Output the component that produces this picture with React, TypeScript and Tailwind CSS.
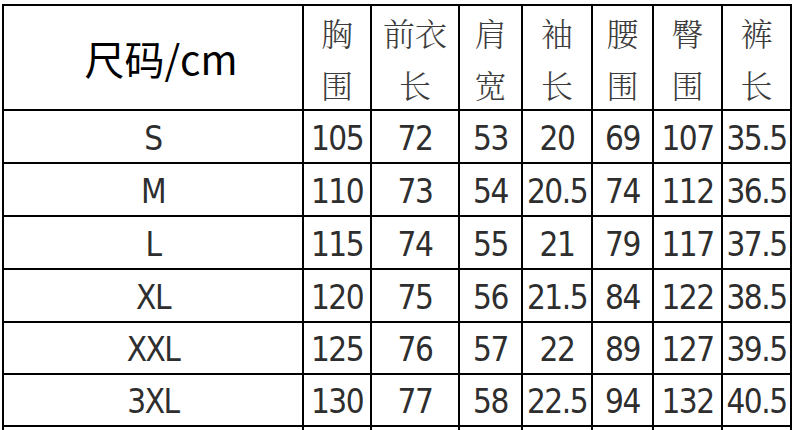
import React from "react";

const wClass = [
  "w-[300px]",
  "w-[68px]",
  "w-[88px]",
  "w-[63px]",
  "w-[70px]",
  "w-[61px]",
  "w-[69px]",
  "w-[69px]",
];

const headers: [string, string][] = [
  ["胸", "围"],
  ["前衣", "长"],
  ["肩", "宽"],
  ["袖", "长"],
  ["腰", "围"],
  ["臀", "围"],
  ["裤", "长"],
];

const rows: string[][] = [
  ["S", "105", "72", "53", "20", "69", "107", "35.5"],
  ["M", "110", "73", "54", "20.5", "74", "112", "36.5"],
  ["L", "115", "74", "55", "21", "79", "117", "37.5"],
  ["XL", "120", "75", "56", "21.5", "84", "122", "38.5"],
  ["XXL", "125", "76", "57", "22", "89", "127", "39.5"],
  ["3XL", "130", "77", "58", "22.5", "94", "132", "40.5"],
  ["", "", "", "", "", "", "", ""],
];

const rowH = ["h-[53px]", "h-[53px]", "h-[53px]", "h-[53px]", "h-[52px]", "h-[52px]", "h-[52px]"];

export default function App() {
  return (
    <div className="w-[793px] h-[430px] overflow-hidden bg-white">
      <div className="ml-[2px] mt-[4px] w-[790px] border-l-2 border-t-2 border-black">
        <div className="flex h-[105px]">
          <div
            className={`${wClass[0]} shrink-0 border-r-2 border-b-2 border-black flex items-center justify-center pl-[16px] text-[40px] leading-none text-black`}
            style={{ fontFamily: '"Noto Sans CJK SC", "Noto Sans", sans-serif' }}
          >
            尺码/cm
          </div>
          {headers.map((h, i) => (
            <div
              key={i}
              className={`${wClass[i + 1]} shrink-0 border-r-2 border-b-2 border-black flex flex-col items-center justify-start text-[32px] leading-[52px] text-[#3c3c3c] font-light`}
              style={{ fontFamily: '"Noto Serif CJK SC", "Noto Sans CJK SC", serif' }}
            >
              <span>{h[0]}</span>
              <span>{h[1]}</span>
            </div>
          ))}
        </div>
        {rows.map((r, ri) => (
          <div key={ri} className={`flex ${rowH[ri]}`}>
            {r.map((c, ci) => (
              <div
                key={ci}
                className={`${wClass[ci]} shrink-0 border-r-2 border-b-2 border-black flex items-center justify-center pt-[3px] text-[33px] leading-none tracking-[-1.5px] text-[#2e2e2e] whitespace-nowrap [font-stretch:condensed]`}
                style={{ fontFamily: '"DejaVu Sans Condensed", "DejaVu Sans", "Liberation Sans", sans-serif' }}
              >
                {c}
              </div>
            ))}
          </div>
        ))}
      </div>
    </div>
  );
}
